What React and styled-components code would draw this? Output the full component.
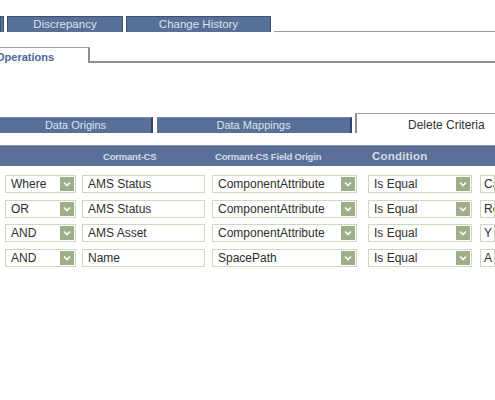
import React from 'react';
import styled, { createGlobalStyle } from 'styled-components';

const GlobalStyle = createGlobalStyle`
    body {
        margin: 0;
        background: #ffffff;
        font-family: 'Liberation Sans', Arial, sans-serif;
        overflow: hidden;
    }
`;

const Page = styled.div`
    width: 495px;
    height: 400px;
    overflow: hidden;
    background: #ffffff;
`;

const TopTabs = styled.div`
    display: flex;
    gap: 3px;
    margin-top: 16px;
    height: 16px;
`;

const DarkTab = styled.div`
    flex: 0 0 ${(props) => props.$w}px;
    box-sizing: border-box;
    background: #586f97;
    border: 1px solid #3f5273;
    border-bottom: none;
    color: #dbe3f0;
    font-size: ${(props) => props.$size || 11.5}px;
    line-height: 15px;
    text-align: center;
    white-space: nowrap;
    overflow: hidden;
`;

const Rule = styled.div`
    flex: 1;
    border-bottom: 1px solid #9c9c9c;
`;

const OpsRow = styled.div`
    display: flex;
    margin-top: 15px;
    height: 16px;
`;

const OpsTab = styled.div`
    flex: 0 0 90px;
    box-sizing: border-box;
    border-top: 1px solid #a5a5a5;
    border-right: 2px solid #8f8f8f;
    background: #ffffff;
    font-size: 11px;
    font-weight: bold;
    line-height: 14px;
    color: #4a6998;
    white-space: nowrap;
    overflow: hidden;

    span {
        display: inline-block;
        margin-left: -4px;
        margin-top: 2px;
    }
`;

const OpsRule = styled.div`
    flex: 1;
    border-bottom: 2px solid #8f8f8f;
`;

const SubTabs = styled.div`
    display: flex;
    align-items: flex-end;
    margin-top: 50px;
    height: 20px;
`;

const SubTab = styled(DarkTab)`
    height: 16px;
    margin-right: ${(props) => props.$gap}px;
    border-left: none;
    border-right: 2px solid #334561;
    border-top: 1px solid #7488aa;
    font-size: 11px;
`;

const OpenTab = styled.div`
    flex: 1;
    height: 20px;
    box-sizing: border-box;
    border-top: 1px solid #a0a0a0;
    border-left: 2px solid #8c8c8c;
    padding-left: 51px;
    font-size: 12px;
    line-height: 22px;
    color: #333333;
    white-space: nowrap;
`;

const HeaderBar = styled.div`
    display: grid;
    grid-template-columns: 82px 130px 156px 113px 1fr;
    align-items: center;
    margin-top: 12px;
    height: 21px;
    box-sizing: border-box;
    background: #5a7098;
    border-top: 1px solid #8798b6;
`;

const HeadLabel = styled.div`
    padding-left: ${(props) => props.$pad}px;
    color: #d3dbe8;
    font-size: ${(props) => (props.$big ? 11.5 : 9.5)}px;
    font-weight: bold;
    letter-spacing: ${(props) => (props.$big ? '0.2px' : '-0.2px')};
    white-space: nowrap;
`;

const Rows = styled.div`
    display: flex;
    flex-direction: column;
    gap: 6.5px;
    margin-top: 9px;
`;

const Row = styled.div`
    display: grid;
    grid-template-columns: 77px 130px 156px 112px 1fr;
    padding-left: 5px;
    height: 18px;
`;

const Field = styled.div`
    display: flex;
    align-items: center;
    box-sizing: border-box;
    width: ${(props) => (props.$w ? `${props.$w}px` : 'auto')};
    height: 18px;
    background: #ffffff;
    border: 1px solid #cfd7c3;
    padding-left: ${(props) => (props.$tight ? 3 : 5)}px;
    font-size: 12px;
    color: #2e2e2e;
    white-space: nowrap;
    overflow: hidden;
`;

const FieldText = styled.span`
    flex: 1;
    overflow: hidden;
`;

const DropButton = styled.div`
    display: flex;
    align-items: center;
    justify-content: center;
    flex: 0 0 14px;
    height: 14px;
    margin-right: 1px;
    background: #9eae89;
`;

const Chevron = () => (
    <svg width="8" height="6" viewBox="0 0 8 6">
        <path d="M1 1.5 L4 4.5 L7 1.5" fill="none" stroke="#ffffff" strokeWidth="1.6" />
    </svg>
);

const Select = ({ w, children }) => (
    <Field $w={w}>
        <FieldText>{children}</FieldText>
        <DropButton>
            <Chevron />
        </DropButton>
    </Field>
);

const criteria = [
    { join: 'Where', field: 'AMS Status', origin: 'ComponentAttribute', value: 'Ca' },
    { join: 'OR', field: 'AMS Status', origin: 'ComponentAttribute', value: 'Re' },
    { join: 'AND', field: 'AMS Asset', origin: 'ComponentAttribute', value: 'Y' },
    { join: 'AND', field: 'Name', origin: 'SpacePath', value: 'A' },
];

const App = () => {
    return (
        <Page>
            <GlobalStyle />
            <TopTabs>
                <DarkTab $w={4} />
                <DarkTab $w={116}>Discrepancy</DarkTab>
                <DarkTab $w={145}>Change History</DarkTab>
                <Rule />
            </TopTabs>
            <OpsRow>
                <OpsTab>
                    <span>Operations</span>
                </OpsTab>
                <OpsRule />
            </OpsRow>
            <SubTabs>
                <SubTab $w={153} $gap={4}>
                    Data Origins
                </SubTab>
                <SubTab $w={195} $gap={3}>
                    Data Mappings
                </SubTab>
                <OpenTab>Delete Criteria</OpenTab>
            </SubTabs>
            <HeaderBar>
                <div />
                <HeadLabel $pad={21}>Cormant-CS</HeadLabel>
                <HeadLabel $pad={3}>Cormant-CS Field Origin</HeadLabel>
                <HeadLabel $pad={4} $big>
                    Condition
                </HeadLabel>
                <div />
            </HeaderBar>
            <Rows>
                {criteria.map((item, index) => (
                    <Row key={index}>
                        <Select w={71}>{item.join}</Select>
                        <Field $w={123}>{item.field}</Field>
                        <Select w={145}>{item.origin}</Select>
                        <Select w={104}>Is Equal</Select>
                        <Field $tight>{item.value}</Field>
                    </Row>
                ))}
            </Rows>
        </Page>
    );
};

export default App;
